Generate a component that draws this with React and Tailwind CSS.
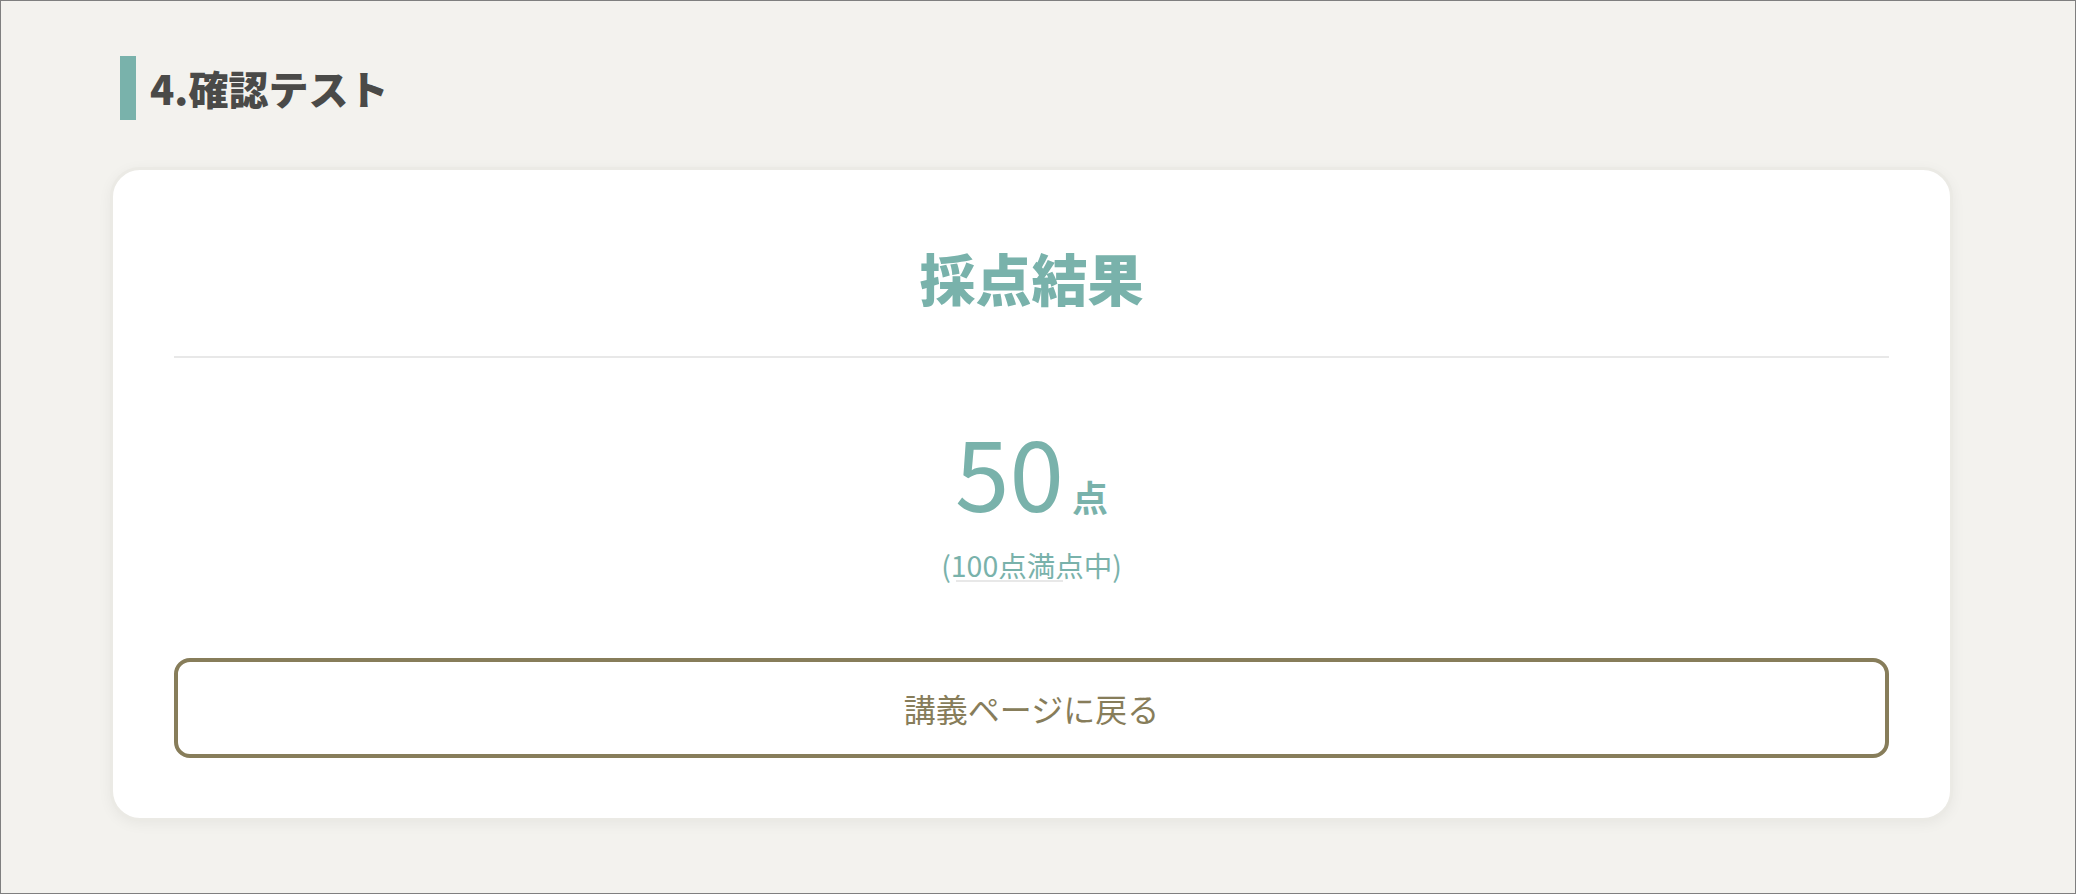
import React from "react";

const font = { fontFamily: '"Noto Sans CJK JP", "Noto Sans", sans-serif' };

export default function App() {
  return (
    <div
      className="h-[894px] w-full border border-[#7f7f7f] bg-[#f3f2ee] pl-[109px] pr-[122px] pt-[55px]"
      style={font}
    >
      {/* section heading */}
      <div className="ml-[10px] flex h-[64px] items-center gap-[14px]">
        <div className="h-full w-[16px] bg-[#79b2ab]" />
        <h2 className="text-[40px] font-black leading-none text-[#4a4a48]">4.確認テスト</h2>
      </div>

      {/* result card */}
      <div className="mt-[47px] rounded-[30px] border-[3px] border-[#ebeae5] bg-white px-[61px] pt-[65px] pb-[60px] shadow-[0_3px_14px_rgba(0,0,0,0.05)]">
        <div className="border-b-2 border-[#e8e8e8] pb-[37px] text-center">
          <h3 className="text-[56px] font-black leading-[84px] text-[#79b2ab]">採点結果</h3>
        </div>

        <div className="mt-[61px] flex flex-col items-center text-[#79b2ab]">
          <div className="flex items-baseline">
            <span className="text-[98px] font-normal leading-[100px]">50</span>
            <span className="ml-[8px] text-[36px] font-bold leading-none">点</span>
          </div>
          <div className="relative mt-[26px] text-[28.5px] leading-[40px]">
            (100点満点中)
            <span className="absolute bottom-[3px] left-[15px] h-[2px] w-[107px] bg-[#e8e8e8]" />
          </div>
        </div>

        <button className="mt-[73px] flex h-[100px] w-full items-center justify-center rounded-[16px] border-4 border-[#877d5a] bg-white text-[32px] text-[#877d5a]">
          講義ページに戻る
        </button>
      </div>
    </div>
  );
}
